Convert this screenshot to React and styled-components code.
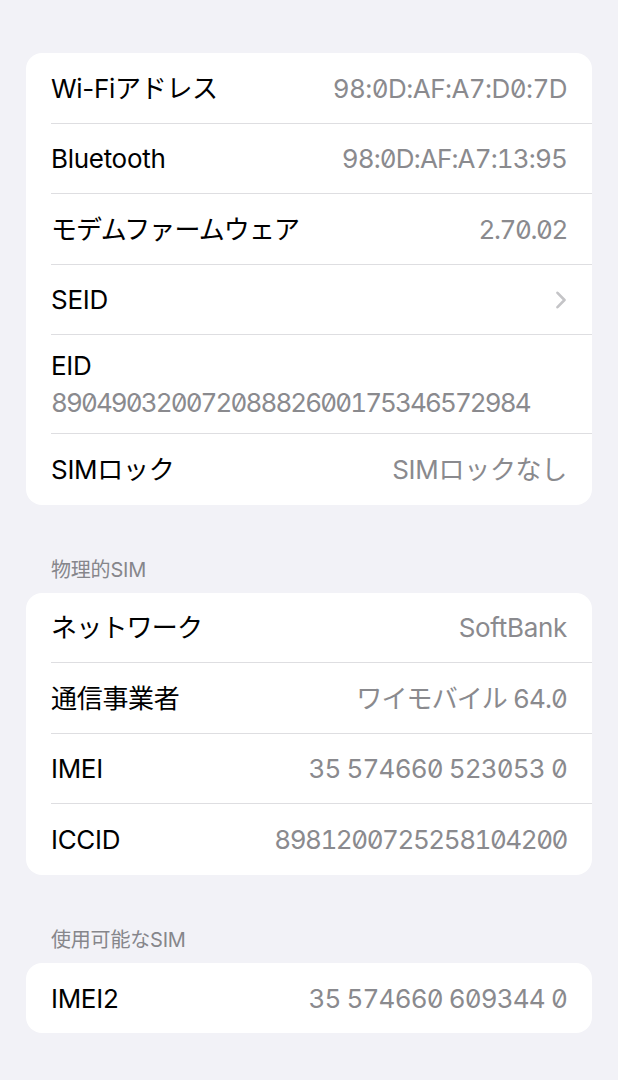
import React from "react";
import styled, { createGlobalStyle } from "styled-components";

const Global = createGlobalStyle`
  html, body { margin: 0; padding: 0; background: #F2F2F7; }
  body { font-family: Inter, "Noto Sans CJK JP", sans-serif; -webkit-font-smoothing: antialiased; }
`;

const Page = styled.div`
  padding: 53px 26px 40px;
  display: flex;
  flex-direction: column;
`;

const Card = styled.div`
  background: #ffffff;
  border-radius: 16px;
  overflow: hidden;
`;

const Row = styled.div`
  box-sizing: border-box;
  height: ${(p) => (p.$tall ? "99px" : "70.5px")};
  margin-left: 25px;
  padding-right: 25px;
  display: flex;
  flex-direction: ${(p) => (p.$tall ? "column" : "row")};
  align-items: ${(p) => (p.$tall ? "flex-start" : "center")};
  justify-content: ${(p) => (p.$tall ? "flex-start" : "space-between")};
  padding-top: ${(p) => (p.$tall ? "16px" : "2px")};
  border-bottom: 1px solid #DEDEE1;
  &:last-child { border-bottom: none; }
`;

const Label = styled.span`
  font-size: 26px;
  line-height: 30px;
  color: #000000;
  letter-spacing: ${(p) => p.$ls ?? "-0.3px"};
  white-space: nowrap;
`;

const Value = styled.span`
  font-size: 26px;
  line-height: 30px;
  color: #8A8A8E;
  letter-spacing: ${(p) => p.$ls ?? "-0.3px"};
  white-space: nowrap;
  font-feature-settings: "tnum" 1, "zero" 1;
  margin-top: ${(p) => (p.$below ? "7px" : "0")};
`;

const SectionHeader = styled.div`
  margin: 53px 0 11px;
  padding-left: 25px;
  font-size: 20px;
  line-height: 24px;
  color: #86868B;
  letter-spacing: -0.2px;
`;

const Chevron = () => (
  <svg width="12" height="18" viewBox="0 0 12 18">
    <polyline
      points="2.5,1.8 9.5,9 2.5,16.2"
      fill="none"
      stroke="#C4C4C7"
      strokeWidth="2.6"
      strokeLinecap="round"
      strokeLinejoin="round"
    />
  </svg>
);

const InfoRow = ({ label, value, chevron, labelLs, valueLs }) => (
  <Row>
    <Label $ls={labelLs}>{label}</Label>
    {chevron ? <Chevron /> : <Value $ls={valueLs}>{value}</Value>}
  </Row>
);

export default function App() {
  return (
    <>
      <Global />
      <Page>
        <Card>
          <InfoRow label="Wi-Fiアドレス" value="98:0D:AF:A7:D0:7D" valueLs="-0.55px" />
          <InfoRow label="Bluetooth" value="98:0D:AF:A7:13:95" valueLs="-0.85px" />
          <InfoRow label="モデムファームウェア" labelLs="-0.9px" value="2.70.02" valueLs="-1.4px" />
          <InfoRow label="SEID" chevron />
          <Row $tall>
            <Label>EID</Label>
            <Value $below $ls="-1.9px">89049032007208882600175346572984</Value>
          </Row>
          <InfoRow label="SIMロック" value="SIMロックなし" />
        </Card>
        <SectionHeader>物理的SIM</SectionHeader>
        <Card>
          <InfoRow label="ネットワーク" labelLs="-0.8px" value="SoftBank" />
          <InfoRow label="通信事業者" value="ワイモバイル 64.0" valueLs="-0.9px" />
          <InfoRow label="IMEI" value="35 574660 523053 0" valueLs="-0.85px" />
          <InfoRow label="ICCID" value="8981200725258104200" valueLs="-1.45px" />
        </Card>
        <SectionHeader>使用可能なSIM</SectionHeader>
        <Card>
          <InfoRow label="IMEI2" value="35 574660 609344 0" valueLs="-0.85px" />
        </Card>
      </Page>
    </>
  );
}
